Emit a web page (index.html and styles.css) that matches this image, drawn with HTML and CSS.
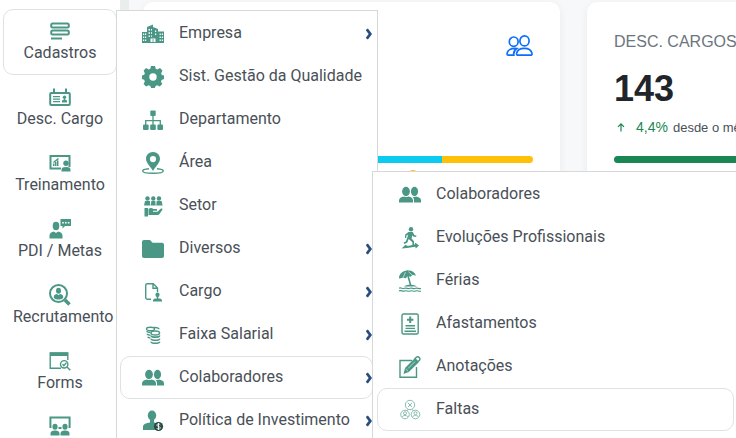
FILE: index.html
```html
<!DOCTYPE html>
<html lang="pt-br">
<head>
    <meta charset="UTF-8">
    <title>Cadastros</title>
    <link rel="stylesheet" href="styles.css">
</head>
<body>
<svg class="sprite" aria-hidden="true">
    <symbol id="people" viewBox="0 0 22 22">
        <ellipse cx="7" cy="7.500" rx="3.900" ry="4.700"/>
        <ellipse cx="15.500" cy="7.500" rx="3.600" ry="4.700"/>
        <path d="M0 18.500v-2c0-2.200 2-3.600 5-4 1.300.7 3 .7 4.300 0 3 .4 4.700 1.800 4.700 4v2z"/>
        <path d="M15 18.500v-2.200c0-1.500-.6-2.700-1.600-3.500.9.400 2.300.4 3.600-.3 2.700.4 5 1.600 5 3.800v2.200z"/>
    </symbol>
    <symbol id="chevron" viewBox="0 0 6 12">
        <path d="M.8 1.200L4.300 6 .8 10.800" fill="none" stroke="#2b4c7e" stroke-width="2.800"/>
    </symbol>
</svg>
<div class="app">
    <nav class="sidebar">
        <a href="#" class="side-item active">
            <svg class="icon" viewBox="0 0 22 22"><g class="line"><rect x="2.200" y="3.500" width="17.600" height="4" rx="1.500"/><rect x="2.200" y="10.500" width="17.600" height="4" rx="1.500"/><path d="M2 18.500h11"/></g></svg>
            <span>Cadastros</span>
        </a>
        <a href="#" class="side-item">
            <svg class="icon" viewBox="0 0 22 22"><g class="line"><rect x="1.200" y="7" width="19.600" height="12" rx="1"/><path d="M5 2.500v4.500M17 2.500v4.500"/></g><path d="M4 10h7v1.200H4zM4 12.500h7v1.200H4zM4 15h7v1.200H4zM13 16.500v-1.200c0-1 1-1.600 2-1.800v-1h1v1c1 .2 2 .8 2 1.800v1.200z"/><circle cx="15.500" cy="11.200" r="1.700"/></svg>
            <span>Desc. Cargo</span>
        </a>
        <a href="#" class="side-item">
            <svg class="icon" viewBox="0 0 22 22"><path class="line" d="M12 16.500H1.500V4h19v11"/><path d="M4 11.500h1.500V14H4zM6 10h1.500v4H6zM8 8.500h1.500V14H8zM4 10l5-4 1 1-5 4zM12.500 19.500v-2c0-1.700 1.500-2.500 4.500-2.500s4.500.8 4.500 2.500v2z"/><circle cx="17" cy="11.200" r="2.700"/></svg>
            <span>Treinamento</span>
        </a>
        <a href="#" class="side-item">
            <svg class="icon" viewBox="0 0 22 22"><ellipse cx="7" cy="8" rx="3.300" ry="4.200"/><path d="M.5 20.500v-2.800c0-2.600 2-3.900 4.500-4.200l2 1.500 2-1.500c2.500.3 4.500 1.600 4.500 4.200v2.800z"/><path d="M11.500 1H22v7h-6l-2.500 2.500V8h-2z"/><path d="M13.200 4h1.600v1.500h-1.600zM16 4h1.600v1.500H16zM18.800 4h1.600v1.500h-1.600z" fill="#fff"/></svg>
            <span>PDI / Metas</span>
        </a>
        <a href="#" class="side-item">
            <svg class="icon" viewBox="0 0 22 22"><circle class="line" cx="9.500" cy="9.500" r="8.500"/><ellipse cx="9.500" cy="6.700" rx="2.500" ry="3"/><path d="M4.800 14v-1.200c0-1.700 1.700-2.500 3.200-2.700l1.500 1.200 1.500-1.200c1.500.2 3.200 1 3.200 2.700V14c-2.700 2-6.700 2-9.400 0z"/><path d="M16 16l4.500 4.500" stroke="#4b9785" stroke-width="3.600"/></svg>
            <span>Recrutamento</span>
        </a>
        <a href="#" class="side-item">
            <svg class="icon" viewBox="0 0 22 22"><path class="thin" d="M12 18.200H1.200V3h17.600v7"/><path d="M1 2.500h18V6H1z"/><circle class="thin" cx="15.200" cy="14.300" r="3.700"/><path class="thin" d="M13.500 14.200l1.400 1.400 2.600-3M18 17l3.300 3.300"/></svg>
            <span>Forms</span>
        </a>
        <a href="#" class="side-item" aria-label="Reuniões">
            <svg class="icon" viewBox="0 0 22 22"><path class="line" d="M2.500 11H1.400V1.500h19.200V11h-1.100M9.500 12h3"/><ellipse cx="6" cy="10.700" rx="2.600" ry="3"/><ellipse cx="16" cy="10.700" rx="2.600" ry="3"/><path d="M1.500 19.500V17.500c0-2 1.500-3 4.500-3s4.500 1 4.500 3v2zM11.500 19.500V17.500c0-2 1.500-3 4.500-3s4.500 1 4.500 3v2z"/></svg>
        </a>
    </nav>
    <div class="divider"></div>
    <main class="cards">
        <section class="card">
            <div class="card-head">
                <svg class="users" viewBox="0 0 28 22" fill="none" stroke="#0d6efd" stroke-width="1.700"><ellipse cx="8.700" cy="6.700" rx="4.400" ry="4.700"/><ellipse cx="19.500" cy="5.900" rx="4.600" ry="5"/><path d="M13.300 20.200c-1.500 0-2-.8-1.700-2 .6-2.800 3.500-4.900 7.700-4.900s7.100 2.100 7.700 4.900c.3 1.200-.2 2-1.700 2zM11.800 13.500c-6-.7-9.800 2-9.800 5.200 0 1 .4 1.500 1.300 1.500h5.500c-.5-2.700.6-5 3-6.700z"/></svg>
            </div>
            <div class="progress"><div class="bar cyan" style="width: 75%"></div><div class="bar yellow" style="width: 25%"></div></div>
            <div class="legend"><i class="dot"></i></div>
        </section>
        <section class="card">
            <h2 class="card-title">DESC. CARGOS</h2>
            <div class="card-number">143</div>
            <div class="card-info">
                <svg class="up" viewBox="0 0 14 14"><path d="M7 11.500V4M4 6.800l3-3 3 3" fill="none" stroke="#198754" stroke-width="1.200"/></svg>
                <span class="percent">4,4%</span>
                <span class="since">desde o mês</span>
            </div>
            <div class="progress"><div class="bar green" style="width: 100%"></div></div>
        </section>
    </main>
</div>

<!-- menu Cadastros -->
<nav class="menu menu-main">
    <a href="#" class="menu-item">
        <svg class="icon" viewBox="0 0 22 22"><path d="M0 9h5v11H0zM5 4l6-2.500V20H5zM11 4l5 2v14h-5zM16 8.500h6V20h-6z"/><path d="M1 10.500h1.200V12H1zM3 10.500h1.200V12H3zM1 13.500h1.200V15H1zM3 13.500h1.200V15H3zM1 16.500h1.200V18H1zM3 16.500h1.200V18H3zM6.500 6H8v1.500H6.500zM9 6h1v1.500H9zM6.500 9.200H8v1.500H6.500zM9 9.200h1v1.500H9zM6.500 12.400H8v1.300H6.500zM9 12.400h1v1.300H9zM13 7.500h1.200V9H13zM13 10.500h1.200V12H13zM17.600 10.500h1.200V12h-1.200zM19.800 10.500H21V12h-1.200zM17.600 13.500h1.200V15h-1.200zM19.800 13.500H21V15h-1.200zM17.600 16.500h1.200V18h-1.200zM19.800 16.500H21V18h-1.200zM8.500 15.500h5V19h-5z" fill="#fff"/><path d="M10.600 16h.8v3h-.8z"/></svg>
        <span class="label">Empresa</span>
        <svg class="arrow"><use href="#chevron"/></svg>
    </a>
    <a href="#" class="menu-item">
        <svg class="icon" viewBox="0 0 22 22"><path fill-rule="evenodd" d="M9 0h4l.7 2.800 1.500.7L18 2l2.500 2.600-1.300 2.700.6 1.600L22 9.500v3.600l-2.400.8-.6 1.500 1.300 2.600-2.500 2.600-2.700-1.300-1.500.7L12.800 22H9.200l-.9-2.100-1.500-.6L4 20.500 1.600 18l1.200-2.600-.6-1.600L0 13V9.400l2.200-.7.600-1.500L1.600 4.600 4.100 2l2.700 1.400 1.500-.6zM11 7.300a3.700 3.700 0 100 7.400 3.700 3.700 0 000-7.400z"/></svg>
        <span class="label">Sist. Gestão da Qualidade</span>
    </a>
    <a href="#" class="menu-item">
        <svg class="icon" viewBox="0 0 22 22"><rect x="8.300" y="1.500" width="5.400" height="5.400" rx="1"/><rect x="1" y="15.500" width="5.600" height="5.500" rx="1"/><rect x="8.200" y="15.500" width="5.600" height="5.500" rx="1"/><rect x="15.400" y="15.500" width="5.600" height="5.500" rx="1"/><path d="M11 6v10M3.700 16v-4.300h14.600V16" fill="none" stroke="#4b9785" stroke-width="1.300"/></svg>
        <span class="label">Departamento</span>
    </a>
    <a href="#" class="menu-item">
        <svg class="icon" viewBox="0 0 22 22"><path fill-rule="evenodd" d="M11 0c4.200 0 7 3 7 6.800 0 4-4.500 7.700-7 12.200C8.500 14.500 4 10.800 4 6.800 4 3 6.800 0 11 0zm0 4a3.100 3.100 0 100 6.200A3.100 3.100 0 0011 4z"/><path class="thin" d="M7 16.800c-3.500.3-6.300 1-6.300 2.100 0 1.300 4.500 2.300 10.300 2.300s10.300-1 10.300-2.300c0-1.100-2.800-1.800-6.300-2.100"/></svg>
        <span class="label">Área</span>
    </a>
    <a href="#" class="menu-item">
        <svg class="icon" viewBox="0 0 22 22"><circle cx="5.500" cy="3.500" r="2.200"/><circle cx="11.300" cy="3.500" r="2.200"/><circle cx="17" cy="3.500" r="2.200"/><path d="M2 10.500l1-4.500h4.900l.5 4.500zM8.900 10.500l.4-4.500h4l.4 4.500zM14.200 10.500l.5-4.500h4.900l1 4.500zM2.500 13H6v8.500H2.500zM6.500 14c2-1.500 3.500-1 5 0h3.500v1.800H11v1h4.500l3.200-3c1-.7 2.300 0 1.500 1.200L17.500 19c-.6.8-1.500 1-2.500 1H6.500z"/></svg>
        <span class="label">Setor</span>
    </a>
    <a href="#" class="menu-item">
        <svg class="icon" viewBox="0 0 22 22"><path d="M2 2h6l2.600 2.700H20c1.200 0 2 .8 2 2V18c0 1.200-.8 2-2 2H2c-1.200 0-2-.8-2-2V4c0-1.200.8-2 2-2z"/></svg>
        <span class="label">Diversos</span>
        <svg class="arrow"><use href="#chevron"/></svg>
    </a>
    <a href="#" class="menu-item">
        <svg class="icon" viewBox="0 0 22 22"><path class="thin" d="M9 18.200H5.300c-1 0-1.600-.6-1.600-1.600V4.400c0-1 .6-1.600 1.600-1.600h6L15.500 7v4M11 3v4.300h4.300"/><ellipse cx="15.500" cy="13.800" rx="2.100" ry="2.400"/><path d="M14.800 15h1.400v2.500h-1.400zM11 20.500v-1c0-1.500 2-2.300 4.500-2.300s4.500.8 4.500 2.300v1z"/></svg>
        <span class="label">Cargo</span>
        <svg class="arrow"><use href="#chevron"/></svg>
    </a>
    <a href="#" class="menu-item">
        <svg class="icon" viewBox="0 0 22 22"><g class="thin"><ellipse cx="8.500" cy="5" rx="4" ry="1.700"/><path d="M4.500 7.300c1 .9 2.500 1.200 4 1.200M4.800 10c1 .9 2 1.200 3.500 1.200M5.500 13c1 .7 1.700.9 2.800 1M12 3.500c2.500-.2 5 .5 5 1.800"/><ellipse cx="13.300" cy="9" rx="4.300" ry="2"/></g><path d="M8.500 11c2 1.700 7.700 1.700 9.700 0v1.500c-1.500 2-8.200 2-9.700 0zM8.500 14.200c2 1.700 7.700 1.700 9.700 0v1.400c-1.500 2-8.200 2-9.700 0zM8.500 17.200c2 1.700 7.700 1.700 9.700 0V18.600c-1.500 2-8.200 2-9.700 0z"/></svg>
        <span class="label">Faixa Salarial</span>
        <svg class="arrow"><use href="#chevron"/></svg>
    </a>
    <a href="#" class="menu-item active">
        <svg class="icon"><use href="#people"/></svg>
        <span class="label">Colaboradores</span>
        <svg class="arrow"><use href="#chevron"/></svg>
    </a>
    <a href="#" class="menu-item">
        <svg class="icon" viewBox="0 0 22 22"><ellipse cx="10" cy="5.500" rx="4.200" ry="5"/><path d="M8 9h4v3.500c3.500.6 6 1.500 6 4V20H1v-3c0-3 3-3.900 7-4.500z"/><circle cx="16.500" cy="16.500" r="4.600" fill="#244a41"/><path d="M18.300 14.900c-.4-.7-1-.9-1.800-.9-2.200 0-2.200 2.200 0 2.500 2.400.3 2.400 2.600 0 2.600-.9 0-1.500-.3-1.900-1M16.500 13v7" fill="none" stroke="#fff" stroke-width=".9"/></svg>
        <span class="label">Política de Investimento</span>
        <svg class="arrow"><use href="#chevron"/></svg>
    </a>
</nav>

<!-- submenu Colaboradores -->
<nav class="menu menu-sub">
    <a href="#" class="menu-item">
        <svg class="icon"><use href="#people"/></svg>
        <span class="label">Colaboradores</span>
    </a>
    <a href="#" class="menu-item">
        <svg class="icon" viewBox="0 0 22 22"><circle cx="12" cy="2.200" r="2.200"/><path d="M9.500 5h4.300l1.500 3 2.200.7-.4 1.300-3-.6-.8-1.200-.7 3.300 2.400 2.700v4.300h-1.600v-3.300l-3.700-3.200-1.500 3.700-3 1.300-.6-1.500 2.200-1.100L8.500 10l.5-2.300-1.500.8-.3 2.500H6l.2-3.400z"/><path d="M2.500 21.500l4-3.800 2.200 1.200 7-1.300.6-1.800L20 18.400l-3.200 3-.5-1.600L8 21z"/></svg>
        <span class="label">Evoluções Profissionais</span>
    </a>
    <a href="#" class="menu-item">
        <svg class="icon" viewBox="0 0 22 22"><path d="M0 8.500C0 3.500 3.500 1 8 .4L8.800 0l.4.600c4 0 7 2 7.600 5.200l-3-1-2.300 2-2.800-.8-2 2.200-3-.5z"/><path d="M9 6l2.600 9" stroke="#4b9785" stroke-width="1.600"/><path d="M6.500 2.200L4 8M9.500 1.800L13 5" stroke="#fff" stroke-width=".6"/><path d="M5 16.500c2-2.500 10-2.500 13 0z"/><g fill="none" stroke="#4b9785" stroke-width="1.200"><path d="M0 18.300c2-1.400 3.500 1 5.500 0s3.500 1 5.500 0 3.500 1 5.500 0 3.500 1 5.500 0M0 21c2-1.400 3.500 1 5.500 0s3.500 1 5.500 0 3.500 1 5.500 0 3.500 1 5.500 0"/></g></svg>
        <span class="label">Férias</span>
    </a>
    <a href="#" class="menu-item">
        <svg class="icon" viewBox="0 0 22 22"><rect class="thin" x="3" y="1" width="16.200" height="20" rx="1.500"/><path d="M10.200 3.500h2v2.200h2.200v2h-2.200v2.200h-2V7.700H8v-2h2.200zM6.500 12h9.500v1.500H6.500zM6.500 14.800h9.500v1.300H6.500zM5.500 17.500h11.500v1.500H5.500z"/></svg>
        <span class="label">Afastamentos</span>
    </a>
    <a href="#" class="menu-item">
        <svg class="icon" viewBox="0 0 22 22"><path class="thin" d="M13 4.500H1v16.700h16.500V11"/><path d="M4.500 18l1.500-6 9.500-9.500 4 4-9.700 9.500z"/><path d="M6.700 13l2.500 2.400M9 12.500l7-7" stroke="#fff" stroke-width=".6"/><path class="thin" d="M16 2.800l1.300-1.500c1-1 2.200-.6 2.900.1s1.200 2 .2 2.900l-1.500 1.500z"/></svg>
        <span class="label">Anotações</span>
    </a>
    <a href="#" class="menu-item active">
        <svg class="icon" viewBox="0 0 22 22"><g fill="none" stroke="#8abdb0" stroke-width="1"><circle cx="11" cy="6" r="4.700"/><circle cx="6" cy="15.500" r="4.300"/><circle cx="16.500" cy="15.500" r="4.300"/><path d="M9 4l4 4M13 4L9 8M3 18c1-2 5-2 6 0M13.500 18c1-2 5-2 6 0M9 10.500l-1 1.500M13.500 10.500l1 1.500"/><circle cx="6" cy="14.200" r="1.500"/><circle cx="16.500" cy="14.200" r="1.500"/></g></svg>
        <span class="label">Faltas</span>
    </a>
</nav>
</body>
</html>
```
FILE: styles.css
```css
* {
    margin: 0;
    padding: 0;
    box-sizing: border-box;
}

body {
    font-family: "Liberation Sans", Arial, sans-serif;
    font-size: 16px;
    color: #212529;
    background: #f7f8fa;
    overflow: hidden;
}

a {
    color: #495057;
    text-decoration: none;
}

.sprite {
    display: block;
    width: 0;
    height: 0;
}

.app {
    display: flex;
    height: 100vh;
}

.icon {
    display: block;
    flex: none;
    width: 22px;
    height: 22px;
    fill: #4b9785;
}

.line,
.thin {
    fill: none;
    stroke: #4b9785;
    stroke-width: 2;
}

.thin {
    stroke-width: 1.4;
}

/* sidebar */
.sidebar {
    flex: none;
    width: 120px;
    padding: 9px 3px 0;
    background: #fff;
    font-family: Roboto, sans-serif;
    overflow: hidden;
}

.side-item {
    display: flex;
    flex-direction: column;
    align-items: safe center;
    height: 66px;
    padding: 10px 9px 0;
    border: 1px solid transparent;
    border-radius: 10px;
    line-height: 21px;
}

.side-item.active,
.menu-item.active {
    border-color: #dee2e6;
}

.divider {
    flex: none;
    width: 9px;
    background: #e9eeed;
}

/* cards */
.cards {
    flex: 1;
    display: flex;
    align-items: flex-start;
    gap: 27px;
    min-width: 0;
    padding: 2px 14px;
    overflow: hidden;
}

.card {
    flex: none;
    width: 417px;
    height: 220px;
    padding: 27px;
    background: #fff;
    border-radius: 10px;
    box-shadow: 0 2px 8px rgba(0, 0, 0, 0.06);
}

.card-head {
    display: flex;
    justify-content: flex-end;
    height: 127px;
    padding-top: 6px;
}

.users {
    width: 28px;
    height: 22px;
}

.card-title {
    font-size: 16px;
    font-weight: normal;
    line-height: 26px;
    color: #6c757d;
    white-space: nowrap;
}

.card-number {
    margin-top: 11px;
    font-size: 36px;
    font-weight: bold;
    line-height: 46px;
}

.card-info {
    display: flex;
    align-items: center;
    height: 30px;
    margin-bottom: 14px;
    white-space: nowrap;
}

.up {
    width: 14px;
    height: 14px;
    margin-right: 8px;
}

.percent {
    margin-right: 5px;
    font-size: 14px;
    color: #198754;
}

.since {
    font-size: 13px;
    color: #495057;
}

.progress {
    display: flex;
    height: 7px;
    border-radius: 4px;
    overflow: hidden;
}

.cyan {
    background: #0dcaf0;
}

.yellow {
    background: #ffc107;
}

.green {
    background: #198754;
}

.legend {
    display: flex;
    justify-content: center;
    padding: 7px 0 0 123px;
}

.dot {
    width: 10px;
    height: 10px;
    border-radius: 50%;
    background: #ffc107;
}

/* dropdown menus */
.menu {
    position: absolute;
    bottom: 0;
    padding: 1px 4px 0;
    background: #fff;
    border: 1px solid #d6d8da;
    border-bottom: none;
    font-family: Roboto, sans-serif;
    overflow: hidden;
}

.menu-main {
    left: 116px;
    top: 10px;
    width: 262px;
    padding-left: 3px;
}

.menu-sub {
    left: 372px;
    top: 171px;
    width: 367px;
}

.menu-item {
    display: flex;
    align-items: center;
    height: 43px;
    padding-left: 21px;
    border: 1px solid transparent;
    border-radius: 10px;
    white-space: nowrap;
}

.menu-item:hover {
    border-color: #dee2e6;
}

.label {
    padding: 0 0 2px 15px;
}

.arrow {
    width: 6px;
    height: 12px;
    margin-left: auto;
}
```
